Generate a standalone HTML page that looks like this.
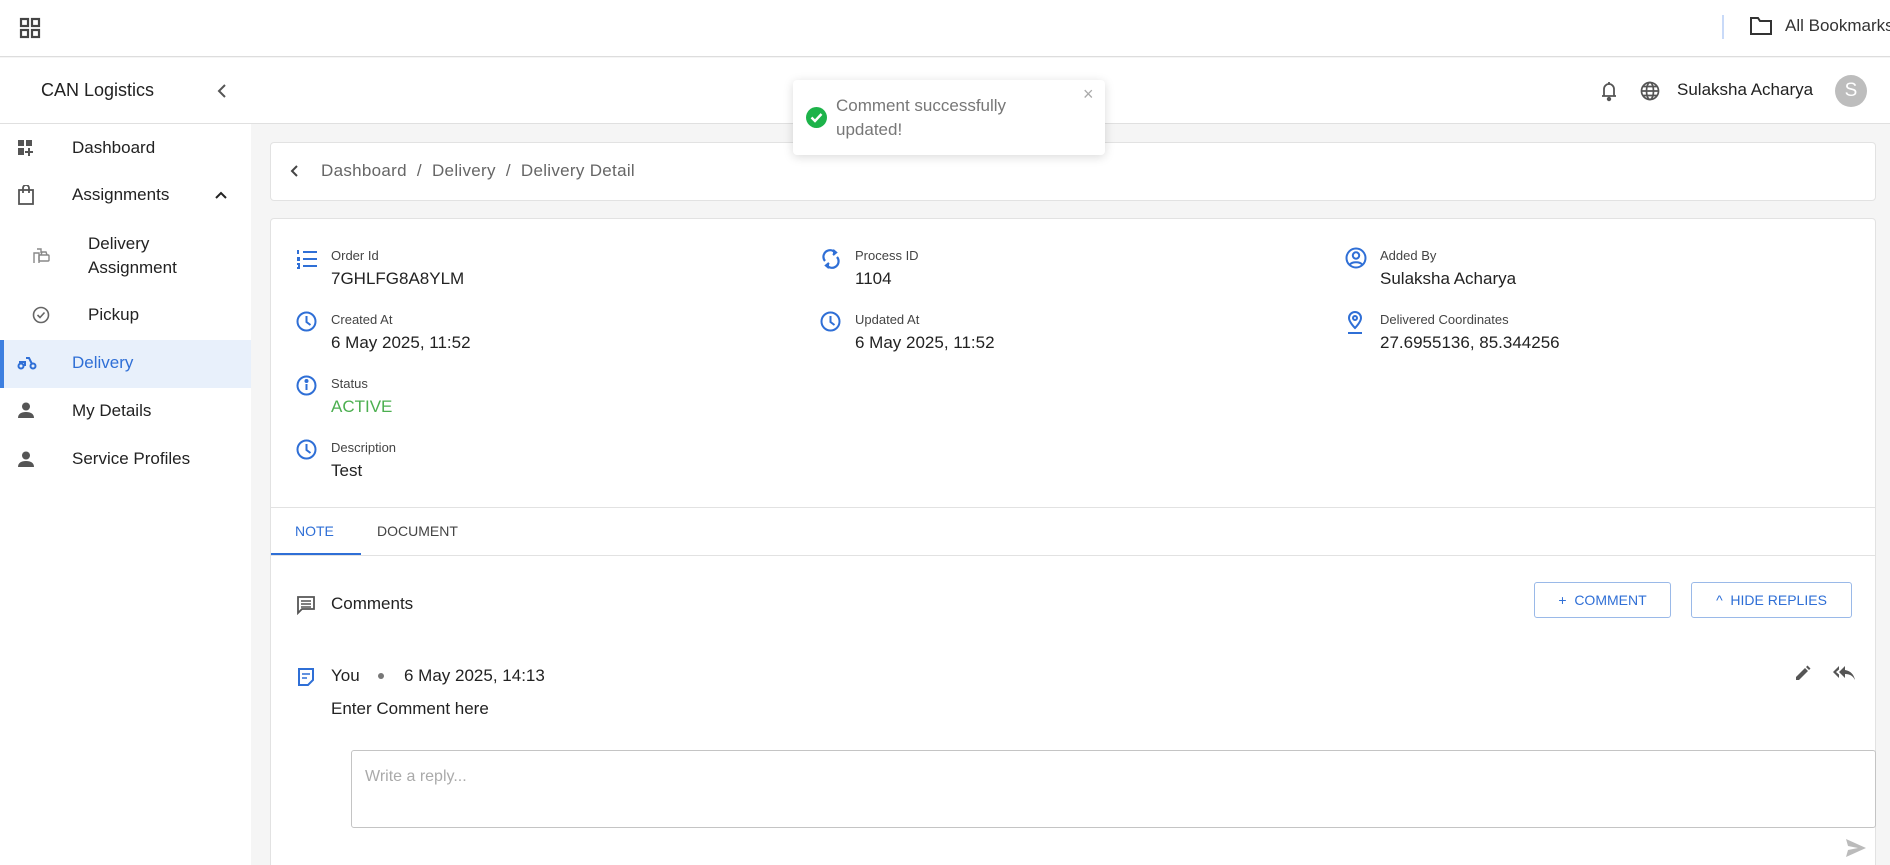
<!DOCTYPE html>
<html style="width:1890px;height:865px;overflow:hidden"><head><meta charset="utf-8"><style>
*{margin:0;padding:0;box-sizing:border-box}
body{width:1890px;height:865px;overflow:hidden;background:#f5f5f5;font-family:"Liberation Sans",sans-serif;color:#222;position:relative}
.a{position:absolute;white-space:nowrap}
.lbl{font-size:13px;color:#444}
.val{font-size:17px;color:#222}
svg{position:absolute}
</style></head><body>
<!-- top bar -->
<div class="a" style="left:0;top:0;width:1890px;height:57px;background:#fff;border-bottom:1px solid #ddd"></div>
<svg style="left:19px;top:17px" width="22" height="22" viewBox="0 0 22 22" fill="none" stroke="#444" stroke-width="2.2"><rect x="2" y="2" width="7" height="7"/><rect x="13" y="2" width="7" height="7"/><rect x="2" y="13" width="7" height="7"/><rect x="13" y="13" width="7" height="7"/></svg>
<div class="a" style="left:1722px;top:15px;width:2px;height:24px;background:#c9daf8"></div>
<svg style="left:1749px;top:16px" width="24" height="20" viewBox="0 0 24 20" fill="none" stroke="#333" stroke-width="2"><path d="M2 2h7l2 3h11v13H2z"/></svg>
<div class="a" style="left:1785px;top:16px;font-size:17px;color:#333">All Bookmarks</div>
<!-- header -->
<div class="a" style="left:0;top:58px;width:1890px;height:66px;background:#fff;border-bottom:1px solid #e0e0e0"></div>
<div class="a" style="left:41px;top:80px;font-size:18px;color:#222">CAN Logistics</div>
<svg style="left:215px;top:83px" width="14" height="16" viewBox="0 0 14 16" fill="none" stroke="#555" stroke-width="2"><path d="M10 2L4 8l6 6"/></svg>
<svg style="left:1599px;top:80px" width="20" height="22" viewBox="0 0 20 22" fill="none" stroke="#555" stroke-width="1.8"><path d="M5 16V9a5 5 0 0110 0v7M3 16h14M10 2v2"/><circle cx="10" cy="19" r="1.3" fill="#555"/></svg>
<svg style="left:1640px;top:81px" width="20" height="20" viewBox="0 0 20 20" fill="none" stroke="#555" stroke-width="1.7"><circle cx="10" cy="10" r="8.5"/><ellipse cx="10" cy="10" rx="3.5" ry="8.5"/><path d="M1.5 10h17M3 5.5h14M3 14.5h14"/></svg>
<div class="a" style="left:1677px;top:80px;font-size:17px;color:#222">Sulaksha Acharya</div>
<div class="a" style="left:1835px;top:75px;width:32px;height:32px;border-radius:50%;background:#bdbdbd;color:#fff;font-size:19px;text-align:center;line-height:32px">S</div>
<!-- sidebar -->
<div class="a" style="left:0;top:124px;width:251px;height:741px;background:#fff"></div>
<div class="a" style="left:0;top:340px;width:251px;height:48px;background:#e8f0fb"></div>
<div class="a" style="left:0;top:340px;width:4px;height:48px;background:#3d7fe0"></div>
<svg style="left:17px;top:139px" width="18" height="18" viewBox="0 0 18 18" fill="#555"><rect x="1" y="1" width="6" height="6"/><rect x="9" y="1" width="6" height="6"/><rect x="1" y="9" width="6" height="7"/><path d="M11 9h2v3h3v2h-3v3h-2v-3H8v-2h3z"/></svg>
<div class="a" style="left:72px;top:138px;font-size:17px">Dashboard</div>
<svg style="left:18px;top:185px" width="16" height="20" viewBox="0 0 16 20" fill="none" stroke="#555" stroke-width="1.8"><rect x="1" y="5" width="14" height="14"/><path d="M5 8V3a3 3 0 016 0v5"/></svg>
<div class="a" style="left:72px;top:185px;font-size:17px">Assignments</div>
<svg style="left:214px;top:190px" width="14" height="10" viewBox="0 0 14 10" fill="none" stroke="#222" stroke-width="2"><path d="M2 8l5-5 5 5"/></svg>
<svg style="left:32px;top:245px" width="18" height="20" viewBox="0 0 18 20" fill="none" stroke="#888" stroke-width="1.4"><path d="M2 18V8h5v10M5 4h4v4"/><rect x="7" y="10" width="10" height="6" rx="1"/><path d="M9 10l1-3h4l1 3"/></svg>
<div class="a" style="left:88px;top:232px;font-size:17px;line-height:24px">Delivery<br>Assignment</div>
<svg style="left:32px;top:306px" width="18" height="18" viewBox="0 0 18 18" fill="none" stroke="#666" stroke-width="1.6"><circle cx="9" cy="9" r="7.5"/><path d="M5.5 9l2.5 2.5 4.5-5"/></svg>
<div class="a" style="left:88px;top:305px;font-size:17px">Pickup</div>
<svg style="left:17px;top:356px" width="20" height="14" viewBox="0 0 20 14" fill="none" stroke="#2f6fd6" stroke-width="2"><circle cx="4" cy="10" r="2.5"/><circle cx="16" cy="10" r="2.5"/><path d="M2 6h6v4M9 2h3l3 6"/></svg>
<div class="a" style="left:72px;top:353px;font-size:17px;color:#2f6fd6">Delivery</div>
<svg style="left:18px;top:402px" width="16" height="16" viewBox="0 0 16 16" fill="#555"><circle cx="8" cy="4.5" r="4"/><path d="M0 16c0-4 3-6 8-6s8 2 8 6z"/></svg>
<div class="a" style="left:72px;top:401px;font-size:17px">My Details</div>
<svg style="left:18px;top:451px" width="16" height="16" viewBox="0 0 16 16" fill="#555"><circle cx="8" cy="4.5" r="4"/><path d="M0 16c0-4 3-6 8-6s8 2 8 6z"/></svg>
<div class="a" style="left:72px;top:449px;font-size:17px">Service Profiles</div>
<!-- breadcrumb -->
<div class="a" style="left:270px;top:142px;width:1606px;height:59px;background:#fff;border:1px solid #e2e2e2;border-radius:4px"></div>
<svg style="left:289px;top:164px" width="12" height="14" viewBox="0 0 12 14" fill="none" stroke="#444" stroke-width="2"><path d="M8 2L3 7l5 5"/></svg>
<div class="a" style="left:321px;top:161px;font-size:17px;color:#666;letter-spacing:0.3px">Dashboard&nbsp; /&nbsp; Delivery&nbsp; /&nbsp; Delivery Detail</div>
<!-- details card -->
<div class="a" style="left:270px;top:218px;width:1606px;height:660px;background:#fff;border:1px solid #e2e2e2;border-radius:4px"></div>
<svg style="left:296px;top:249px" width="22" height="20" viewBox="0 0 22 20" fill="none" stroke="#2f6fd6" stroke-width="2"><path d="M7 3h14M7 10h14M7 17h14M2 1v4M1 9h2v2H1M1 15h2v4H1"/></svg>
<div class="a lbl" style="left:331px;top:248px">Order Id</div><div class="a val" style="left:331px;top:269px">7GHLFG8A8YLM</div>
<svg style="left:822px;top:248px" width="18" height="22" viewBox="0 0 18 22" fill="none" stroke="#2f6fd6" stroke-width="2.2"><path d="M3 13A6.5 6.5 0 0113 4.5M15 9a6.5 6.5 0 01-10 8.5"/><path d="M11 2l3 2.5-3 2.5M7 15l-3 2.5 3 2.5" fill="#2f6fd6"/></svg>
<div class="a lbl" style="left:855px;top:248px">Process ID</div><div class="a val" style="left:855px;top:269px">1104</div>
<svg style="left:1345px;top:247px" width="22" height="22" viewBox="0 0 22 22" fill="none" stroke="#2f6fd6" stroke-width="2"><circle cx="11" cy="11" r="9.5"/><circle cx="11" cy="8.5" r="3.2"/><path d="M5 17.5c2-3 10-3 12 0"/></svg>
<div class="a lbl" style="left:1380px;top:248px">Added By</div><div class="a val" style="left:1380px;top:269px">Sulaksha Acharya</div>
<svg style="left:296px;top:311px" width="21" height="21" viewBox="0 0 21 21" fill="none" stroke="#2f6fd6" stroke-width="2"><circle cx="10.5" cy="10.5" r="9"/><path d="M10.5 5v6l4 3"/></svg>
<div class="a lbl" style="left:331px;top:312px">Created At</div><div class="a val" style="left:331px;top:333px">6 May 2025, 11:52</div>
<svg style="left:820px;top:311px" width="21" height="21" viewBox="0 0 21 21" fill="none" stroke="#2f6fd6" stroke-width="2"><circle cx="10.5" cy="10.5" r="9"/><path d="M10.5 5v6l4 3"/></svg>
<div class="a lbl" style="left:855px;top:312px">Updated At</div><div class="a val" style="left:855px;top:333px">6 May 2025, 11:52</div>
<svg style="left:1346px;top:310px" width="18" height="24" viewBox="0 0 18 24" fill="none" stroke="#2f6fd6" stroke-width="2"><path d="M9 18s-6-6-6-10a6 6 0 0112 0c0 4-6 10-6 10z"/><circle cx="9" cy="8" r="2"/><path d="M2 23h14"/></svg>
<div class="a lbl" style="left:1380px;top:312px">Delivered Coordinates</div><div class="a val" style="left:1380px;top:333px">27.6955136, 85.344256</div>
<svg style="left:296px;top:375px" width="21" height="21" viewBox="0 0 21 21" fill="none" stroke="#2f6fd6" stroke-width="2"><circle cx="10.5" cy="10.5" r="9"/><path d="M10.5 9v6"/><circle cx="10.5" cy="6" r="1" fill="#2f6fd6"/></svg>
<div class="a lbl" style="left:331px;top:376px">Status</div><div class="a val" style="left:331px;top:397px;color:#4caf50">ACTIVE</div>
<svg style="left:296px;top:439px" width="21" height="21" viewBox="0 0 21 21" fill="none" stroke="#2f6fd6" stroke-width="2"><circle cx="10.5" cy="10.5" r="9"/><path d="M10.5 5v6l4 3"/></svg>
<div class="a lbl" style="left:331px;top:440px">Description</div><div class="a val" style="left:331px;top:461px">Test</div>
<div class="a" style="left:271px;top:507px;width:1604px;height:1px;background:#e2e2e2"></div>
<div class="a" style="left:295px;top:523px;font-size:14px;color:#2f6fd6">NOTE</div>
<div class="a" style="left:377px;top:523px;font-size:14px;color:#444">DOCUMENT</div>
<div class="a" style="left:271px;top:555px;width:1604px;height:1px;background:#e2e2e2"></div>
<div class="a" style="left:271px;top:553px;width:90px;height:2px;background:#2f6fd6"></div>
<!-- comments -->
<svg style="left:296px;top:595px" width="20" height="20" viewBox="0 0 20 20" fill="none" stroke="#555" stroke-width="1.8"><path d="M2 2h16v12H6l-4 4z"/><path d="M5 6h10M5 9h10M5 12h10" stroke-width="1.4"/></svg>
<div class="a" style="left:331px;top:594px;font-size:17px;color:#222">Comments</div>
<div class="a" style="left:1534px;top:582px;width:137px;height:36px;border:1px solid #9ab9e8;border-radius:3px;color:#2f6fd6;font-size:14px;line-height:34px;text-align:center">+&nbsp; COMMENT</div>
<div class="a" style="left:1691px;top:582px;width:161px;height:36px;border:1px solid #9ab9e8;border-radius:3px;color:#2f6fd6;font-size:14px;line-height:34px;text-align:center">^&nbsp; HIDE REPLIES</div>
<svg style="left:298px;top:668px" width="16" height="18" viewBox="0 0 16 18" fill="none" stroke="#2f6fd6" stroke-width="2"><path d="M1 1h14v11l-5 5H1z"/><path d="M4 6h8M4 10h5" stroke-width="1.6"/></svg>
<div class="a" style="left:331px;top:666px;font-size:17px">You</div>
<div class="a" style="left:378px;top:673px;width:6px;height:6px;border-radius:50%;background:#777"></div>
<div class="a" style="left:404px;top:666px;font-size:17px">6 May 2025, 14:13</div>
<svg style="left:1794px;top:664px" width="18" height="18" viewBox="0 0 18 18" fill="#555"><path d="M2 13v3h3l9-9-3-3zM12 3l3 3 1.5-1.5-3-3z"/></svg>
<svg style="left:1832px;top:665px" width="24" height="16" viewBox="0 0 24 16" fill="#555"><path d="M7 1L1 7l6 6V9.5L4 7l3-2.5zM13 1L7 7l6 6V9c5 0 8 2 10 6-1-5-4-9-10-10z"/></svg>
<div class="a" style="left:331px;top:699px;font-size:17px">Enter Comment here</div>
<div class="a" style="left:351px;top:750px;width:1525px;height:78px;border:1px solid #c4c4c4;border-radius:3px;background:#fff"></div>
<div class="a" style="left:365px;top:768px;font-size:16px;color:#aaa">Write a reply...</div>
<svg style="left:1845px;top:838px" width="22" height="20" viewBox="0 0 22 20" fill="#bbb"><path d="M1 1l20 9-20 9 2-7 10-2-10-2z"/></svg>
<!-- toast -->
<div class="a" style="left:793px;top:80px;width:312px;height:75px;background:#fff;border-radius:4px;box-shadow:0 2px 10px rgba(0,0,0,.15)"></div>
<svg style="left:806px;top:107px" width="21" height="21" viewBox="0 0 21 21"><circle cx="10.5" cy="10.5" r="10.5" fill="#1db34a"/><path d="M5.5 10.5l3.5 3.5 6.5-7" fill="none" stroke="#fff" stroke-width="2.4"/></svg>
<div class="a" style="left:836px;top:94px;font-size:17px;color:#777;line-height:24px">Comment successfully<br>updated!</div>
<div class="a" style="left:1083px;top:84px;font-size:18px;color:#aaa">×</div>
</body></html>
